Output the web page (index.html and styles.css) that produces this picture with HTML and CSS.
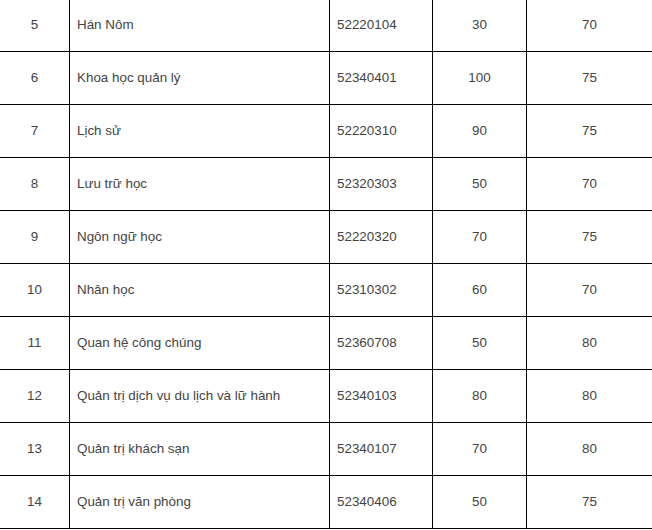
FILE: index.html
```html
<!DOCTYPE html>
<html lang="vi">
<head>
<meta charset="utf-8">
<title>Bảng ngành</title>
<link rel="stylesheet" href="styles.css">
</head>
<body>
<div class="grid">
  <div class="c num">5</div><div class="c txt">Hán Nôm</div><div class="c txt">52220104</div><div class="c num">30</div><div class="c num last">70</div>
  <div class="c num">6</div><div class="c txt">Khoa học quản lý</div><div class="c txt">52340401</div><div class="c num">100</div><div class="c num last">75</div>
  <div class="c num">7</div><div class="c txt">Lịch sử</div><div class="c txt">52220310</div><div class="c num">90</div><div class="c num last">75</div>
  <div class="c num">8</div><div class="c txt">Lưu trữ học</div><div class="c txt">52320303</div><div class="c num">50</div><div class="c num last">70</div>
  <div class="c num">9</div><div class="c txt">Ngôn ngữ học</div><div class="c txt">52220320</div><div class="c num">70</div><div class="c num last">75</div>
  <div class="c num">10</div><div class="c txt">Nhân học</div><div class="c txt">52310302</div><div class="c num">60</div><div class="c num last">70</div>
  <div class="c num">11</div><div class="c txt">Quan hệ công chúng</div><div class="c txt">52360708</div><div class="c num">50</div><div class="c num last">80</div>
  <div class="c num">12</div><div class="c txt">Quản trị dịch vụ du lịch và lữ hành</div><div class="c txt">52340103</div><div class="c num">80</div><div class="c num last">80</div>
  <div class="c num">13</div><div class="c txt">Quản trị khách sạn</div><div class="c txt">52340107</div><div class="c num">70</div><div class="c num last">80</div>
  <div class="c num">14</div><div class="c txt">Quản trị văn phòng</div><div class="c txt">52340406</div><div class="c num">50</div><div class="c num last">75</div>
</div>
</body>
</html>
```
FILE: styles.css
```css
html, body {
  margin: 0;
  padding: 0;
  background: #fff;
}
body {
  font-family: "Liberation Sans", Arial, sans-serif;
  font-size: 13.4px;
  color: #444;
  overflow: hidden;
}
.grid {
  display: grid;
  grid-template-columns: 70px 260px 103px 94px 1fr;
  grid-auto-rows: 53px;
  margin-top: -1px;
  width: 652px;
}
.c {
  box-sizing: border-box;
  border-right: 1px solid #000;
  border-bottom: 1px solid #000;
  padding-bottom: 2px;
  display: flex;
  align-items: center;
  white-space: nowrap;
}
.c.last {
  border-right: none;
}
.num {
  justify-content: center;
}
.txt {
  padding-left: 7px;
}
```
